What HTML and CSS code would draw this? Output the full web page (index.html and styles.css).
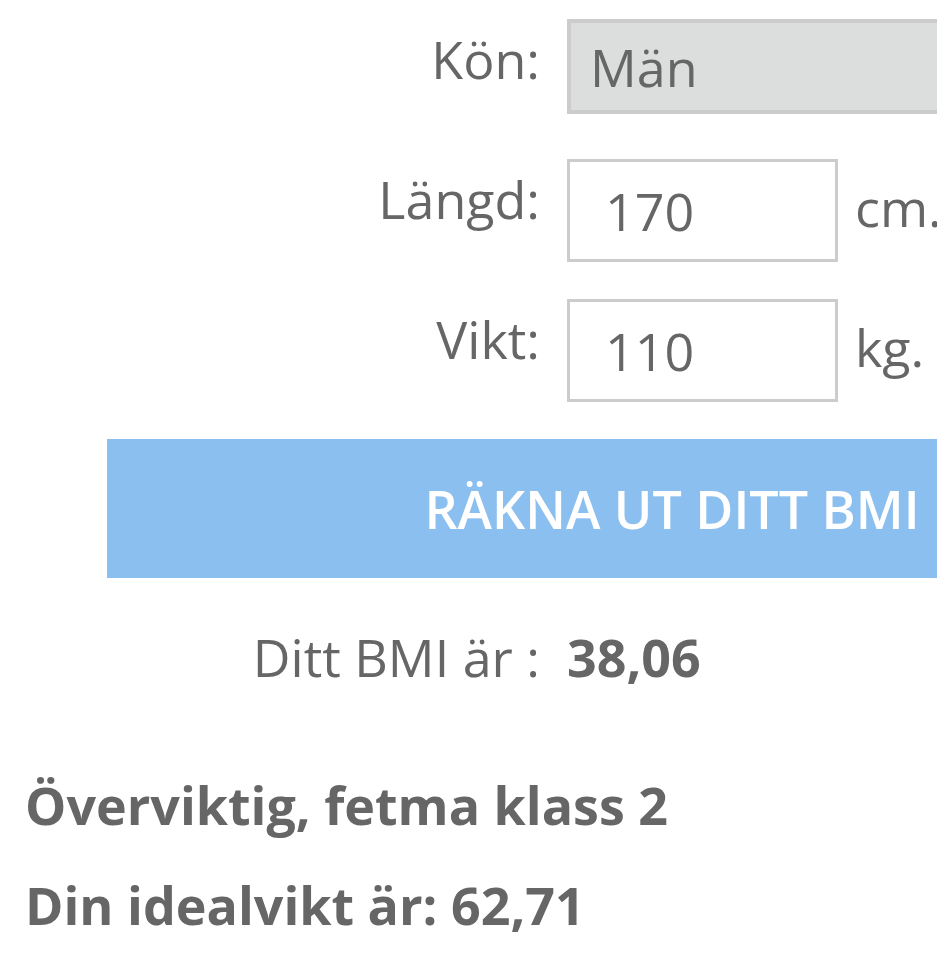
FILE: index.html
```html
<!DOCTYPE html>
<html lang="sv">
<head>
<meta charset="utf-8">
<title>BMI-kalkylator</title>
<link rel="stylesheet" href="styles.css">
</head>
<body>
<main class="page">
  <form class="calc">
    <div class="row">
      <label class="label" for="kon">Kön:</label>
      <div class="field">
        <select id="kon" class="select">
          <option>Män</option>
          <option>Kvinnor</option>
        </select>
      </div>
    </div>
    <div class="row">
      <label class="label" for="langd">Längd:</label>
      <div class="field">
        <input id="langd" class="input" type="text" value="170">
        <span class="unit">cm.</span>
      </div>
    </div>
    <div class="row">
      <label class="label" for="vikt">Vikt:</label>
      <div class="field">
        <input id="vikt" class="input" type="text" value="110">
        <span class="unit">kg.</span>
      </div>
    </div>
    <button class="submit" type="button">RÄKNA UT DITT BMI</button>
    <div class="row result-row">
      <span class="label">Ditt BMI är :</span>
      <strong class="value">38,06</strong>
    </div>
  </form>
  <p class="verdict">Överviktig, fetma klass 2</p>
  <p class="verdict">Din idealvikt är: 62,71</p>
</main>
</body>
</html>
```

FILE: styles.css
```css
html, body {
  margin: 0;
  padding: 0;
  background: #ffffff;
  overflow: hidden;
}

.page {
  font-family: "Open Sans", "Liberation Sans", sans-serif;
  color: #666666;
  font-size: 52px;
  padding: 19px 0 0 25px;
}

.calc {
  margin: 0 0 0 82px;
  width: 1130px;
}

.row {
  display: grid;
  grid-template-columns: 433px 1fr;
  column-gap: 27px;
  align-items: start;
  height: 140px;
}

.label {
  text-align: right;
  padding-top: 5px;
  line-height: 1.362;
  white-space: nowrap;
}

.field {
  display: flex;
  align-items: center;
  gap: 17px;
}

.select,
.input {
  font: inherit;
  color: inherit;
  box-sizing: border-box;
  margin: 0;
  outline: none;
  border-radius: 0;
}

.select {
  appearance: none;
  -webkit-appearance: none;
  width: 100%;
  height: 95px;
  border: 4px solid #cccccc;
  background: #dcdedd;
  padding: 0 19px;
}

.input {
  width: 271px;
  height: 103px;
  border: 3px solid #cccccc;
  background: #ffffff;
  padding: 0 35px;
}

.unit {
  line-height: 1;
  padding-bottom: 8px;
}

.submit {
  display: block;
  width: 100%;
  height: 139px;
  margin: 0;
  border: 0;
  border-radius: 0;
  background: #8bbfef;
  color: #ffffff;
  font-family: inherit;
  font-weight: 600;
  font-size: 52px;
  text-align: center;
  padding: 0;
}

.result-row {
  margin-top: 44px;
  height: auto;
}

.result-row .label {
  padding-top: 0;
}

.value {
  font-weight: 700;
  line-height: 1.362;
}

.verdict {
  margin: 0;
  font-weight: 700;
  line-height: 1.362;
}

.verdict:first-of-type {
  margin-top: 77px;
}

.verdict + .verdict {
  margin-top: 29px;
}
```
